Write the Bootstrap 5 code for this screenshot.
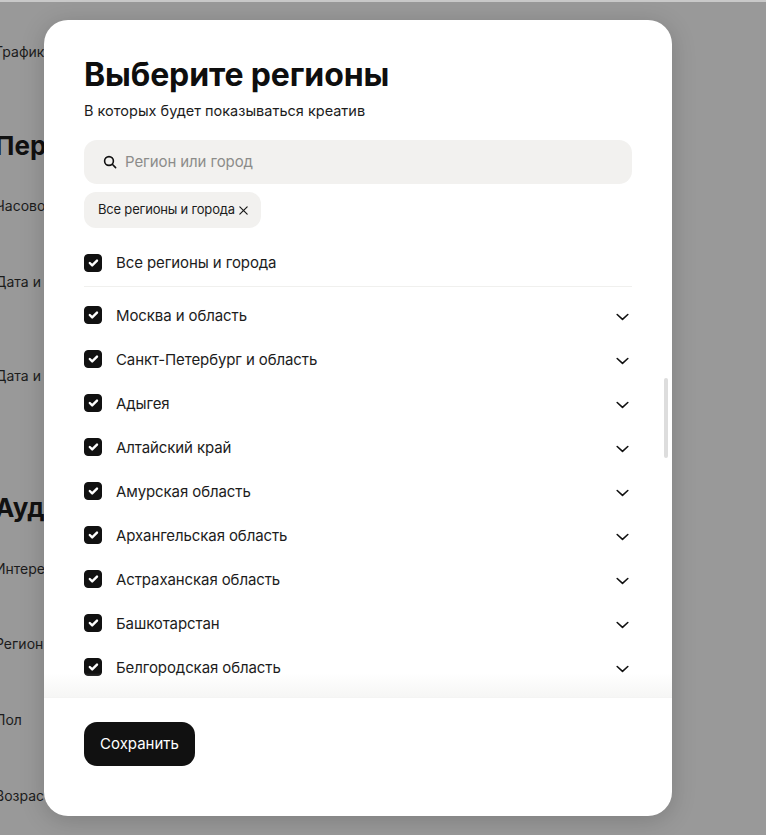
<!DOCTYPE html>
<html lang="ru">
<head>
    <meta charset="UTF-8">
    <meta name="viewport" content="width=device-width, initial-scale=1.0">
    <title>Выберите регионы</title>
    <link href="https://cdn.jsdelivr.net/npm/bootstrap@5.3.0/dist/css/bootstrap.min.css" rel="stylesheet">
    <style>
        html, body { height: 100%; }
        body {
            background: #999;
            color: #1c1c1c;
            font-family: Inter, "Noto Sans", sans-serif;
            overflow: hidden;
            position: relative;
            box-shadow: inset 0 2px 0 #c9c9c9;
        }
        .back-page { margin-left: -5px; white-space: nowrap; font-size: 14px; line-height: 20px; padding-top: 42px; }
        .back-page p { margin: 0; }
        .back-page h2 { margin: 0; font-size: 26px; line-height: 32px; font-weight: 700; color: #111; }
        .back-page .gap-h1 { margin-top: 68px; }
        .back-page .gap-h2 { margin-top: 106px; }
        .back-page .gap-a { margin-top: 34px; }
        .back-page .gap-b { margin-top: 56px; }
        .back-page .gap-c { margin-top: 74px; }
        .back-page .gap-d { margin-top: 35px; }
        .back-page .gap-e { margin-top: 55px; }
        .region-dialog {
            position: absolute;
            left: 44px;
            top: 20px;
            width: 628px;
            height: 796px;
            border-radius: 24px;
            overflow: hidden;
            box-shadow: 0 4px 24px rgba(0, 0, 0, .18);
        }
        .dialog-body { height: 677px; padding: 36px 40px 0; position: relative; overflow: hidden; }
        .dialog-title { font-size: 32px; line-height: 38px; font-weight: 700; letter-spacing: -.12px; color: #0e0e0e; margin: 0; }
        .dialog-sub { font-size: 14.5px; line-height: 20px; margin: 7px 0 0; }
        .search-box { height: 44px; margin-top: 19px; padding: 0 13px 0 19px; background: #f2f1ef; border-radius: 13px; }
        .search-box input { border: 0; outline: 0; background: transparent; padding: 0; width: 100%; font-size: 15px; color: #1c1c1c; letter-spacing: -.1px; }
        .search-box input::placeholder { color: #8c8c8a; opacity: 1; }
        .region-chip { height: 36px; margin-top: 8px; padding: 0 12px 0 14px; background: #f2f1ef; border-radius: 12px; font-size: 13px; letter-spacing: -.2px; gap: 3px; }
        .region-row { height: 44px; font-size: 15px; letter-spacing: -.1px; gap: 14px; }
        .region-row .form-check-input {
            --bs-form-check-bg-image: url("data:image/svg+xml,%3csvg xmlns='http://www.w3.org/2000/svg' viewBox='0 0 20 20'%3e%3cpath fill='none' stroke='%23fff' stroke-linecap='round' stroke-linejoin='round' stroke-width='3' d='m5 10.5 3.5 3.5 6.5-7.5'/%3e%3c/svg%3e");
            width: 18px; height: 18px; margin: -2px 0 0; flex: none;
            background-color: #111; border-color: #111; border-radius: 4px;
        }
        .all-row { margin-top: 13px; height: 46px; border-bottom: 1px solid #f0f0ee; margin-bottom: 7px; }
        .row-chevron { margin-left: auto; margin-right: 3px; margin-top: 2px; flex: none; }
        .list-fade { position: absolute; left: 0; right: 0; bottom: 0; height: 24px; background: linear-gradient(rgba(245, 245, 244, 0), #f6f6f5); }
        .dialog-scroll { position: absolute; left: 620px; top: 358px; width: 4px; height: 80px; background: #ddd; border-radius: 2px; }
        .dialog-foot { height: 119px; padding: 24px 40px; border-top: 1px solid #f4f4f3; }
        .save-btn { height: 44px; width: 111px; padding: 0; background: #111; border: 0; border-radius: 13px; color: #fff; font-size: 15px; }
        .save-btn:hover { background: #111; color: #fff; }
    </style>
</head>
<body>

<!-- page behind the dialog -->
<div class="back-page">
    <p>График</p>
    <h2 class="gap-h1">Пер</h2>
    <p class="gap-a">Часово</p>
    <p class="gap-b">Дата и</p>
    <p class="gap-c">Дата и</p>
    <h2 class="gap-h2">Ауд</h2>
    <p class="gap-d">Интере</p>
    <p class="gap-e">Регион</p>
    <p class="gap-b">Пол</p>
    <p class="gap-b">Возрас</p>
</div>

<div class="region-dialog bg-white d-flex flex-column">
    <div class="dialog-body">
        <h1 class="dialog-title">Выберите регионы</h1>
        <p class="dialog-sub">В которых будет показываться креатив</p>

        <div class="search-box d-flex align-items-center gap-2">
            <svg width="14" height="14" viewBox="0 0 14 14" fill="none" stroke="#111" stroke-width="1.6" class="flex-shrink-0">
                <circle cx="6" cy="6" r="4.4"/><path d="M9.3 9.3 12.6 12.6" stroke-linecap="round"/>
            </svg>
            <input type="text" placeholder="Регион или город">
        </div>

        <div class="region-chip d-inline-flex align-items-center">
            Все регионы и города
            <svg width="11" height="11" viewBox="0 0 12 12" fill="none" stroke="#1c1c1c" stroke-width="1.3" stroke-linecap="round">
                <path d="M2 2 10 10M10 2 2 10"/>
            </svg>
        </div>

        <label class="region-row all-row d-flex align-items-center">
            <input class="form-check-input" type="checkbox" checked>
            Все регионы и города
        </label>

        <div id="regionList"></div>

        <div class="list-fade"></div>
        <div class="dialog-scroll"></div>
    </div>

    <div class="dialog-foot">
        <button type="button" class="btn save-btn">Сохранить</button>
    </div>
</div>

<script src="https://cdn.jsdelivr.net/npm/bootstrap@5.3.0/dist/js/bootstrap.bundle.min.js"></script>
<script>
    const regions = ['Москва и область', 'Санкт-Петербург и область', 'Адыгея', 'Алтайский край', 'Амурская область',
        'Архангельская область', 'Астраханская область', 'Башкотарстан', 'Белгородская область'];

    const regionList = document.getElementById('regionList');
    regions.forEach(name => {
        const row = document.createElement('label');
        row.className = 'region-row d-flex align-items-center';
        row.innerHTML = '<input class="form-check-input" type="checkbox" checked>' + name +
            '<svg class="row-chevron" width="13" height="8" viewBox="0 0 13 8" fill="none" stroke="#111" stroke-width="1.6" stroke-linecap="round" stroke-linejoin="round"><path d="M1.2 1.5 6.5 6.3 11.8 1.5"/></svg>';
        regionList.appendChild(row);
    });
</script>

</body>
</html>
